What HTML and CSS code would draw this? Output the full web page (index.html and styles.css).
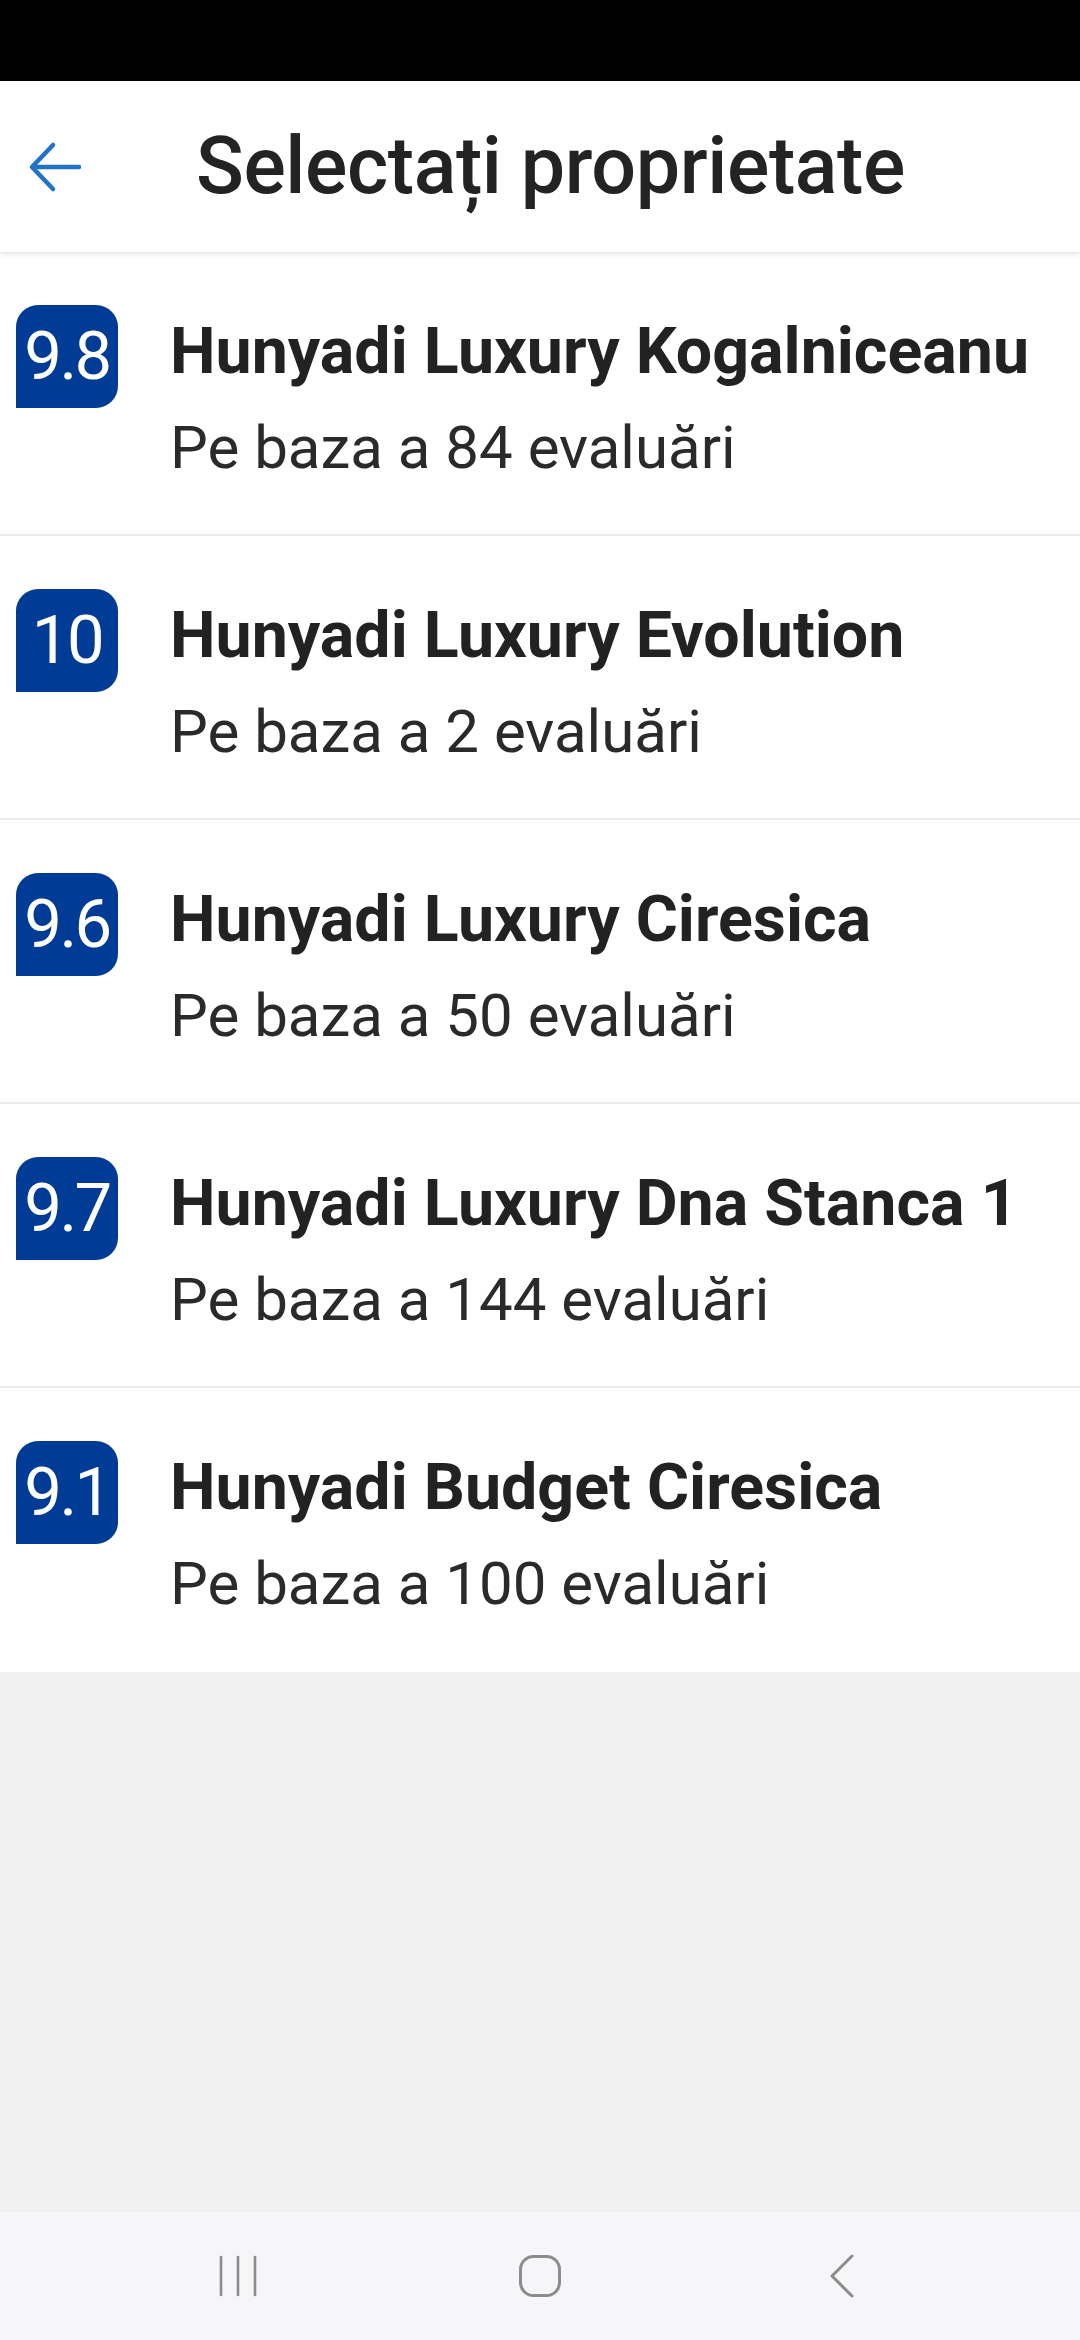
FILE: index.html
```html
<!DOCTYPE html>
<html lang="ro">
<head>
<meta charset="utf-8">
<title>Selectați proprietate</title>
<link rel="stylesheet" href="styles.css">
</head>
<body>
<div class="screen">
  <div class="status-bar"></div>
  <header class="app-bar">
    <button class="back-btn" aria-label="Înapoi">
      <svg width="56" height="56" viewBox="0 0 56 56" fill="none" stroke="#1f74c7" stroke-width="4.5" stroke-linecap="round" stroke-linejoin="round">
        <path d="M6 28 H52"/>
        <path d="M26 6 L5 28 L26 50"/>
      </svg>
    </button>
    <h1 class="app-title">Selectați proprietate</h1>
  </header>
  <ul class="property-list">
    <li class="property">
      <div class="score">9.8</div>
      <div class="info">
        <div class="name">Hunyadi Luxury Kogalniceanu</div>
        <div class="reviews">Pe baza a 84 evaluări</div>
      </div>
    </li>
    <li class="property">
      <div class="score">10</div>
      <div class="info">
        <div class="name">Hunyadi Luxury Evolution</div>
        <div class="reviews">Pe baza a 2 evaluări</div>
      </div>
    </li>
    <li class="property">
      <div class="score">9.6</div>
      <div class="info">
        <div class="name">Hunyadi Luxury Ciresica</div>
        <div class="reviews">Pe baza a 50 evaluări</div>
      </div>
    </li>
    <li class="property">
      <div class="score">9.7</div>
      <div class="info">
        <div class="name">Hunyadi Luxury Dna Stanca 1</div>
        <div class="reviews">Pe baza a 144 evaluări</div>
      </div>
    </li>
    <li class="property">
      <div class="score">9.1</div>
      <div class="info">
        <div class="name">Hunyadi Budget Ciresica</div>
        <div class="reviews">Pe baza a 100 evaluări</div>
      </div>
    </li>
  </ul>
  <div class="filler"></div>
  <nav class="nav-bar">
    <div class="nav-item">
      <svg width="40" height="44" viewBox="0 0 40 44" stroke="#8c8c8c" stroke-width="2.6" stroke-linecap="round">
        <path d="M3 3 V41"/><path d="M20 3 V41"/><path d="M37 3 V41"/>
      </svg>
    </div>
    <div class="nav-item">
      <svg width="46" height="46" viewBox="0 0 46 46" fill="none" stroke="#8c8c8c" stroke-width="3">
        <rect x="3.5" y="3.5" width="39" height="39" rx="13"/>
      </svg>
    </div>
    <div class="nav-item">
      <svg width="30" height="46" viewBox="0 0 30 46" fill="none" stroke="#8c8c8c" stroke-width="3" stroke-linecap="round" stroke-linejoin="round">
        <path d="M25 3 L5 23 L25 43"/>
      </svg>
    </div>
  </nav>
</div>
</body>
</html>
```

FILE: styles.css
```css
* {
  box-sizing: border-box;
}

html, body {
  margin: 0;
  padding: 0;
}

body {
  width: 1080px;
  height: 2340px;
  background: #f1f1f1;
  font-family: Roboto, "Noto Sans", "Liberation Sans", sans-serif;
  color: #222222;
}

.screen {
  width: 1080px;
  height: 2340px;
  display: flex;
  flex-direction: column;
}

.status-bar {
  height: 81px;
  background: #000000;
  flex: none;
}

.app-bar {
  height: 171px;
  flex: none;
  background: #ffffff;
  display: flex;
  align-items: center;
  box-shadow: 0 2px 5px rgba(0, 0, 0, 0.12);
  position: relative;
  z-index: 1;
}

.back-btn {
  width: 56px;
  height: 56px;
  margin-left: 27px;
  padding: 0;
  border: none;
  background: transparent;
  display: flex;
}

.app-title {
  margin: 0 0 0 113px;
  font-size: 79px;
  font-weight: 500;
  line-height: 1;
  color: #232323;
  letter-spacing: -0.4px;
}

.property-list {
  list-style: none;
  margin: 0;
  padding: 0;
  background: #ffffff;
  flex: none;
}

.property {
  height: 284px;
  display: flex;
  align-items: flex-start;
  padding: 53px 0 0 16px;
  border-bottom: 2px solid #ebebeb;
}

.property:last-child {
  border-bottom: none;
}

.score {
  width: 102px;
  height: 103px;
  flex: none;
  background: #003b95;
  color: #ffffff;
  border-radius: 22px 22px 22px 0;
  display: flex;
  align-items: center;
  justify-content: center;
  font-size: 67px;
  font-weight: 400;
  letter-spacing: -2.5px;
  line-height: 1;
}

.info {
  margin-left: 52px;
  padding-top: 8px;
  display: flex;
  flex-direction: column;
}

.name {
  font-size: 64.5px;
  font-weight: 700;
  line-height: 76px;
  color: #222222;
  white-space: nowrap;
}

.reviews {
  margin-top: 24px;
  font-size: 60px;
  font-weight: 400;
  line-height: 70px;
  color: #2a2a2a;
  white-space: nowrap;
}

.filler {
  flex: 1;
  background: #f1f1f1;
}

.nav-bar {
  height: 128px;
  flex: none;
  background: #f6f6f8;
  display: grid;
  grid-template-columns: repeat(3, 302px);
  justify-content: center;
  align-items: center;
}

.nav-item {
  display: flex;
  justify-content: center;
  align-items: center;
}
```
